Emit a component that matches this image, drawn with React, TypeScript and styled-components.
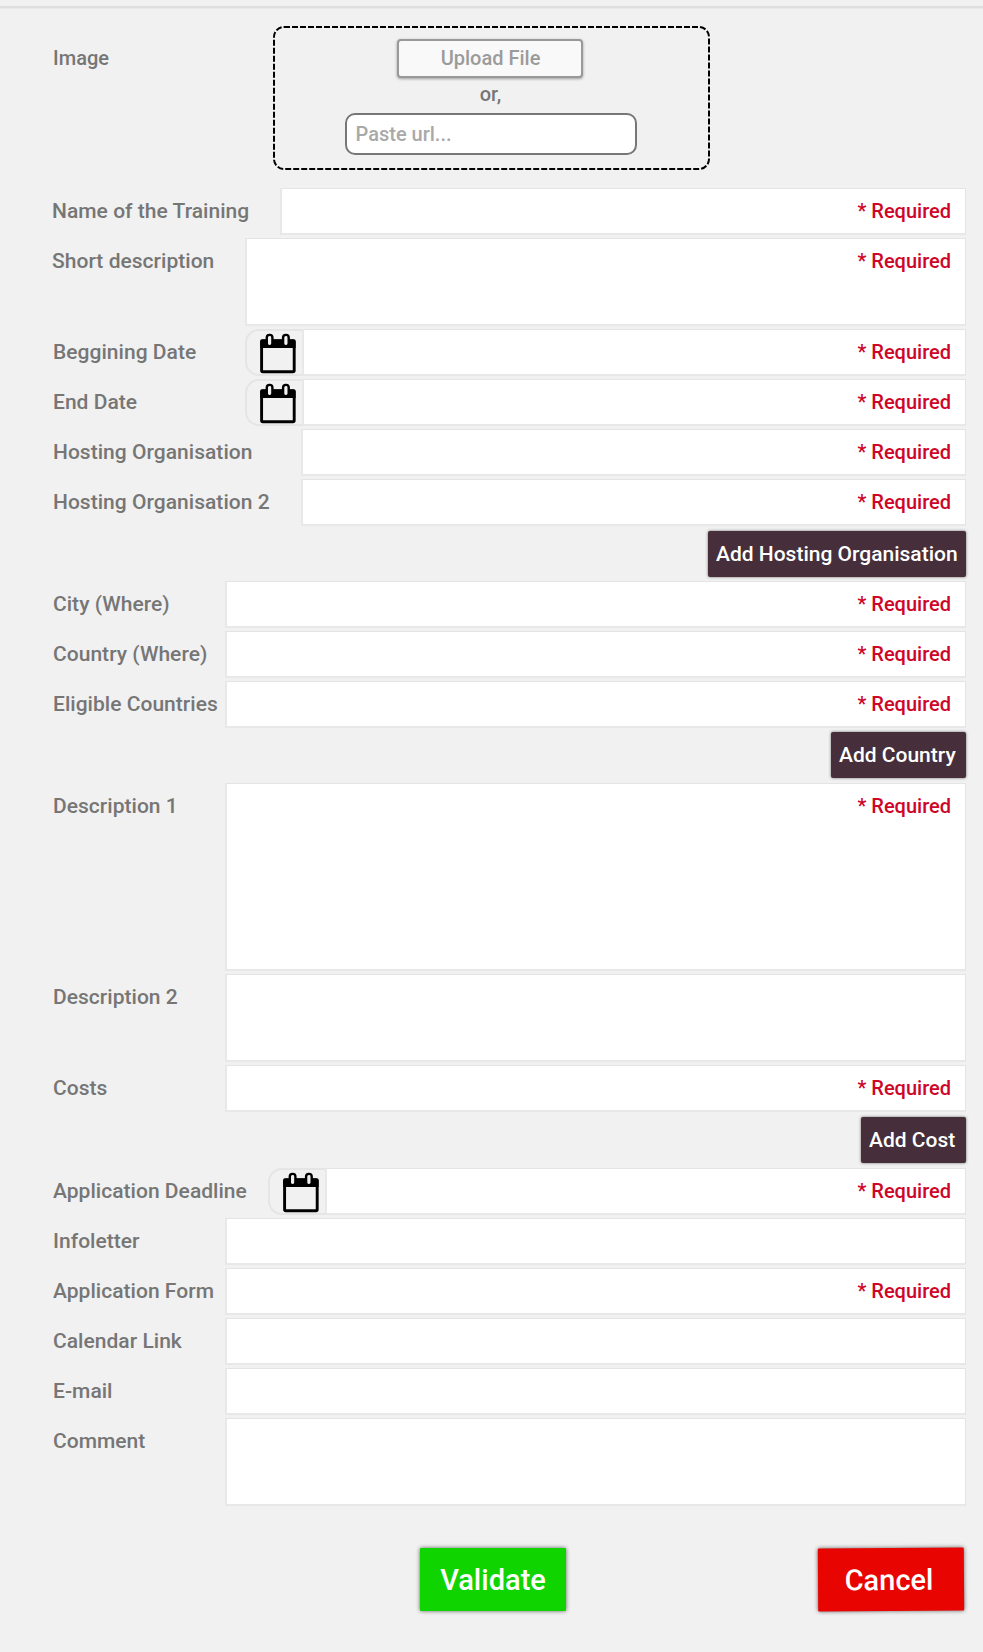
import React from "react";
import styled, { createGlobalStyle } from "styled-components";

const GlobalStyle = createGlobalStyle`
  * { box-sizing: border-box; }
  body {
    margin: 0;
    background: #f1f1f1;
    font-family: Roboto, "Liberation Sans", sans-serif;
    font-weight: 500;
    -webkit-font-smoothing: antialiased;
  }
`;

const Page = styled.main`
  width: 983px;
  height: 1652px;
  background: #f1f1f1;
  color: #767676;
  overflow: hidden;
`;

const TopRule = styled.div`
  height: 8px;
  margin-bottom: 18px;
  border-bottom: 2px solid #dedede;
  box-shadow: 0 1px 1px #e9e9e9;
`;

const Form = styled.form`
  display: flex;
  flex-direction: column;
  gap: 3px;
  padding: 0 17px 0 52px;
`;

const Row = styled.div<{ $height?: number }>`
  display: flex;
  height: ${(p) => p.$height ?? 47}px;
`;

const Label = styled.label<{ $width: number; $shift?: number }>`
  flex: none;
  width: ${(p) => p.$width}px;
  font-size: 21px;
  line-height: 46px;
  letter-spacing: 0.03px;
  white-space: nowrap;
  text-indent: ${(p) => p.$shift ?? 1}px;
`;

const Field = styled.div`
  flex: 1;
  padding-right: 14px;
  background: #fff;
  border: 1px solid #e4e4e4;
  border-left: 2px solid #e8e8e8;
  border-bottom: 2px solid #e8e8e8;
  text-align: right;
`;

const Required = styled.span`
  color: #cf0528;
  font-size: 20px;
  line-height: 44px;
`;

const DateTab = styled.div`
  flex: none;
  display: flex;
  width: 57px;
  padding: 1.5px 0 0 12.6px;
  border: 2px solid #e5e5e5;
  border-right: 0;
  border-radius: 14px 0 0 14px;
`;

const ImageRow = styled.div`
  display: flex;
  height: 144px;
  margin-bottom: 15px;
`;

const ImageLabel = styled(Label)`
  font-size: 20px;
  line-height: 64px;
`;

const DropZone = styled.div`
  position: relative;
  display: flex;
  flex-direction: column;
  align-items: center;
  width: 437px;
  height: 144px;
  padding-top: 13px;
`;

const DashOutline = styled.svg`
  position: absolute;
  inset: 0;
`;

const UploadButton = styled.button`
  width: 186px;
  height: 39px;
  margin-right: 3px;
  padding: 0 0 0 1px;
  border: 2px solid #999;
  border-radius: 4px;
  background: #f9f9f9;
  box-shadow: 0 1px 3px rgba(0, 0, 0, 0.35);
  color: #9b9b9b;
  font: 500 20px/35px Roboto, sans-serif;
`;

const Or = styled.span`
  height: 35px;
  margin-right: 2px;
  font-size: 20px;
  line-height: 33px;
`;

const UrlBox = styled.input`
  width: 292px;
  height: 42px;
  margin-right: 2px;
  padding: 0 9px;
  border: 2px solid #777;
  border-radius: 10px;
  background: #fff;
  font: 500 20px/38px Roboto, sans-serif;
  &::placeholder { color: #a9a9a9; opacity: 1; }
`;

const AddRow = styled.div<{ $height: number; $top?: number }>`
  display: flex;
  justify-content: flex-end;
  height: ${(p) => p.$height}px;
  padding-top: ${(p) => p.$top ?? 2}px;
`;

const AddButton = styled.button<{ $width: number }>`
  width: ${(p) => p.$width}px;
  height: 46px;
  padding: 0 0 0 8px;
  border: 0;
  border-radius: 2px;
  background: #462f3a;
  box-shadow: 0 0 3px rgba(0, 0, 0, 0.55);
  color: #fff;
  font: 500 21px/46px Roboto, sans-serif;
  text-align: left;
  white-space: nowrap;
`;

const Actions = styled.div`
  display: flex;
  justify-content: space-between;
  padding: 42px 19px 0 420px;
`;

const ActionButton = styled.button<{ $color: string; $tilt?: number; $inset?: number }>`
  width: 146px;
  height: 63px;
  padding: 1px ${(p) => p.$inset ?? 0}px 0 0;
  border: 0;
  border-radius: 1px;
  background: ${(p) => p.$color};
  box-shadow: 0 0 4px rgba(0, 0, 0, 0.6);
  color: #fff;
  font: 500 29px/62px Roboto, sans-serif;
  transform: rotate(${(p) => p.$tilt ?? 0}deg);
`;

const CalendarIcon = () => (
  <svg width="37" height="41" viewBox="0 0 37 41">
    <rect x="1.6" y="8" width="32.6" height="30.8" rx="1.2" fill="none" stroke="#000" strokeWidth="2.9" />
    <path d="M.2 8q0-1.7 1.7-1.7h32q1.7 0 1.7 1.7v7H.2z" />
    <rect x="6.8" y="1.9" width="5.6" height="11.3" rx="2.6" fill="#f1f1f1" stroke="#000" strokeWidth="2.4" />
    <rect x="23.1" y="1.9" width="5.6" height="11.3" rx="2.6" fill="#f1f1f1" stroke="#000" strokeWidth="2.4" />
  </svg>
);

type EntryProps = {
  label: string;
  labelWidth?: number;
  height?: number;
  required?: boolean;
  date?: boolean;
  shift?: number;
};

const Entry = ({ label, labelWidth = 173, height, required, date, shift }: EntryProps) => (
  <Row $height={height}>
    <Label $width={labelWidth} $shift={shift}>{label}</Label>
    {date && <DateTab><CalendarIcon /></DateTab>}
    <Field>{required && <Required>* Required</Required>}</Field>
  </Row>
);

export default function App() {
  return (
    <Page>
      <GlobalStyle />
      <TopRule />
      <Form>
        <ImageRow>
          <ImageLabel $width={221}>Image</ImageLabel>
          <DropZone>
            <DashOutline width="437" height="144">
              <rect x="1" y="1" width="435" height="142" rx="10" fill="none" stroke="#000" strokeWidth="2" strokeDasharray="6 2" />
            </DashOutline>
            <UploadButton type="button">Upload File</UploadButton>
            <Or>or,</Or>
            <UrlBox placeholder="Paste url..." />
          </DropZone>
        </ImageRow>
        <Entry label="Name of the Training" labelWidth={228} required shift={0} />
        <Entry label="Short description" labelWidth={193} height={88} required shift={0} />
        <Entry label="Beggining Date" labelWidth={193} required date />
        <Entry label="End Date" labelWidth={193} required date />
        <Entry label="Hosting Organisation" labelWidth={249} required />
        <Entry label="Hosting Organisation 2" labelWidth={249} required />
        <AddRow $height={49}>
          <AddButton type="button" $width={258}>Add Hosting Organisation</AddButton>
        </AddRow>
        <Entry label="City (Where)" required />
        <Entry label="Country (Where)" required />
        <Entry label="Eligible Countries" required />
        <AddRow $height={49} $top={1}>
          <AddButton type="button" $width={135}>Add Country</AddButton>
        </AddRow>
        <Entry label="Description 1" height={188} required />
        <Entry label="Description 2" height={88} />
        <Entry label="Costs" required />
        <AddRow $height={50}>
          <AddButton type="button" $width={105}>Add Cost</AddButton>
        </AddRow>
        <Entry label="Application Deadline" labelWidth={216} required date />
        <Entry label="Infoletter" />
        <Entry label="Application Form" required />
        <Entry label="Calendar Link" />
        <Entry label="E-mail" />
        <Entry label="Comment" height={88} />
      </Form>
      <Actions>
        <ActionButton type="button" $color="#10d400">Validate</ActionButton>
        <ActionButton type="button" $color="#e80400" $tilt={-0.4} $inset={4}>Cancel</ActionButton>
      </Actions>
    </Page>
  );
}
